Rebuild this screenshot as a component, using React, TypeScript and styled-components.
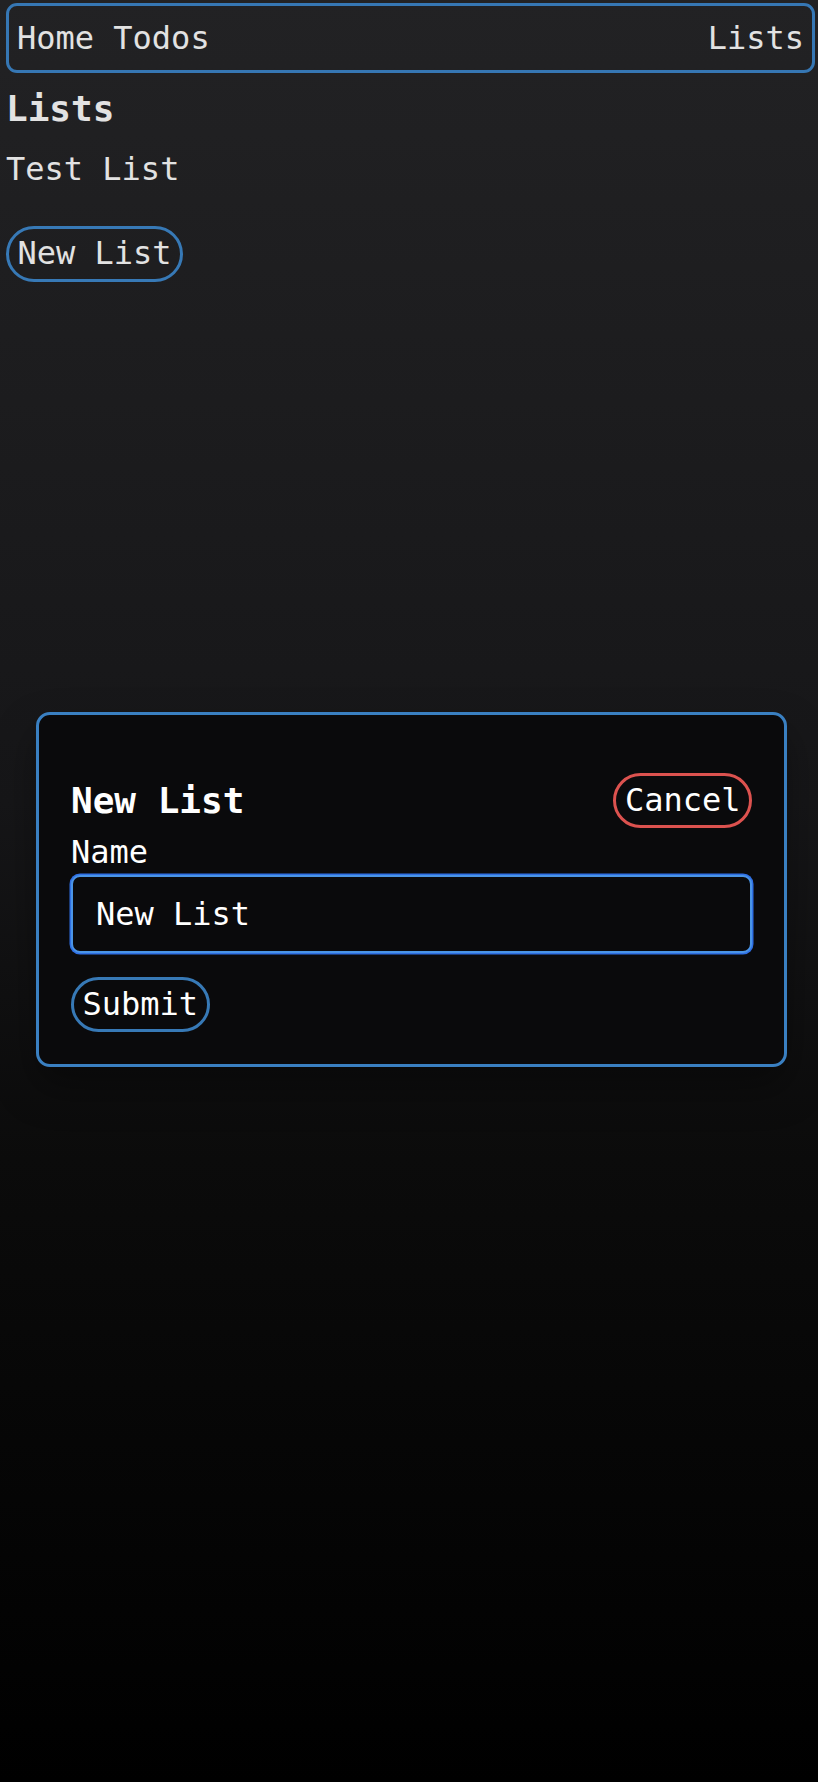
import React from "react";
import styled, { createGlobalStyle } from "styled-components";

const Global = createGlobalStyle`
  html, body {
    margin: 0;
    padding: 0;
    background: #000;
  }
  body {
    font-family: "DejaVu Sans Mono", "Liberation Mono", monospace;
  }
`;

const Page = styled.div`
  position: relative;
  min-height: 1782px;
  box-sizing: border-box;
  padding: 3px 3px 0 6px;
  background: linear-gradient(180deg, #222224 0%, #161618 45%, #0b0b0b 65%, #000000 100%);
  color: #e2e2e2;
  font-size: 32px;
  line-height: 37.25px;
`;

const Nav = styled.nav`
  display: flex;
  justify-content: space-between;
  align-items: center;
  height: 70px;
  box-sizing: border-box;
  padding: 2px 8px 0;
  border: 3px solid #3677b4;
  border-radius: 11px;
`;

const NavGroup = styled.div`
  display: flex;
  gap: 19.26px;
`;

const NavLink = styled.a`
  color: #e2e2e2;
  text-decoration: none;
`;

const PageTitle = styled.h3`
  margin: 15px 0 0;
  font-size: 36px;
  line-height: 42px;
  font-weight: bold;
  color: #e2e2e2;
`;

const ListItem = styled.div`
  margin-top: 21px;
`;

const PillButton = styled.button<{ $tone?: "blue" | "red" }>`
  font-family: inherit;
  font-size: 32px;
  line-height: 37.25px;
  padding: 6px 8.5px;
  background: transparent;
  color: inherit;
  border: 3px solid ${(p) => (p.$tone === "red" ? "#dc524f" : "#3779b6")};
  border-radius: 999px;
  cursor: pointer;
`;

const NewButtonRow = styled.div`
  margin-top: 38px;
  display: flex;
`;

const Dialog = styled.div`
  position: absolute;
  left: 36px;
  top: 712px;
  width: 751px;
  box-sizing: border-box;
  padding: 58px 32px 32px;
  background: #0a0a0c;
  color: #ffffff;
  border: 3px solid #3a80c2;
  border-radius: 14px;
  box-shadow: 0 20px 40px rgba(0, 0, 0, 0.35);
`;

const DialogHeader = styled.div`
  display: flex;
  justify-content: space-between;
  align-items: center;
`;

const DialogTitle = styled.h3`
  margin: 0;
  font-size: 36px;
  line-height: 42px;
  font-weight: bold;
`;

const Form = styled.form`
  display: flex;
  flex-direction: column;
  align-items: flex-start;
`;

const Label = styled.label`
  margin-top: 5.5px;
`;

const Input = styled.input`
  margin-top: 4px;
  width: 100%;
  height: 78px;
  box-sizing: border-box;
  padding: 0 23px;
  font-family: inherit;
  font-size: 32px;
  color: #ffffff;
  background: #0a0a0c;
  border: 2px solid #4a94e6;
  box-shadow: 0 0 0 1.5px #2f6fe4;
  border-radius: 9px;
  outline: none;
`;

const SubmitRow = styled.div`
  margin-top: 24px;
`;

export default function App() {
  return (
    <>
      <Global />
      <Page>
        <Nav>
          <NavGroup>
            <NavLink href="#">Home</NavLink>
            <NavLink href="#">Todos</NavLink>
          </NavGroup>
          <NavLink href="#">Lists</NavLink>
        </Nav>
        <PageTitle>Lists</PageTitle>
        <ListItem>Test List</ListItem>
        <NewButtonRow>
          <PillButton type="button">New List</PillButton>
        </NewButtonRow>
        <Dialog role="dialog">
          <DialogHeader>
            <DialogTitle>New List</DialogTitle>
            <PillButton type="button" $tone="red">Cancel</PillButton>
          </DialogHeader>
          <Form onSubmit={(e) => e.preventDefault()}>
            <Label htmlFor="name">Name</Label>
            <Input id="name" defaultValue="New List" />
            <SubmitRow>
              <PillButton type="submit">Submit</PillButton>
            </SubmitRow>
          </Form>
        </Dialog>
      </Page>
    </>
  );
}
